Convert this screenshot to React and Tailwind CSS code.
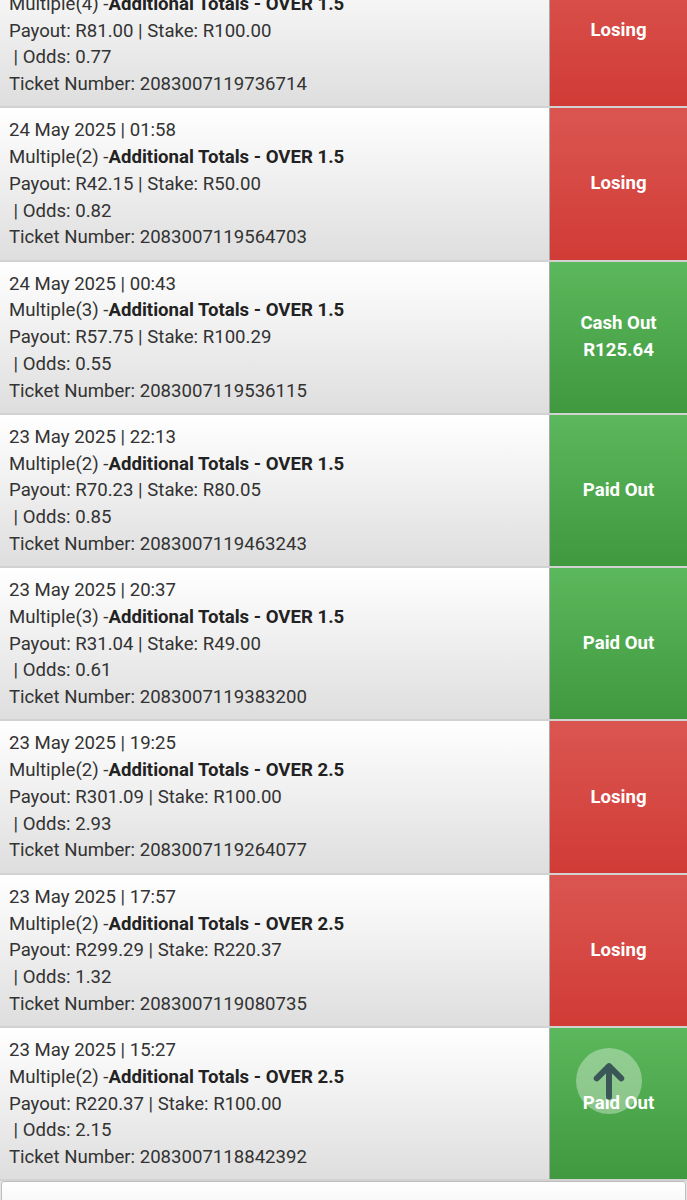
import React from "react";

const rows = [
  { date: "24 May 2025 | 09:12", mult: 4, over: "1.5", payout: "R81.00", stake: "R100.00", odds: "0.77", ticket: "2083007119736714", status: "lose" },
  { date: "24 May 2025 | 01:58", mult: 2, over: "1.5", payout: "R42.15", stake: "R50.00", odds: "0.82", ticket: "2083007119564703", status: "lose" },
  { date: "24 May 2025 | 00:43", mult: 3, over: "1.5", payout: "R57.75", stake: "R100.29", odds: "0.55", ticket: "2083007119536115", status: "cash" },
  { date: "23 May 2025 | 22:13", mult: 2, over: "1.5", payout: "R70.23", stake: "R80.05", odds: "0.85", ticket: "2083007119463243", status: "paid" },
  { date: "23 May 2025 | 20:37", mult: 3, over: "1.5", payout: "R31.04", stake: "R49.00", odds: "0.61", ticket: "2083007119383200", status: "paid" },
  { date: "23 May 2025 | 19:25", mult: 2, over: "2.5", payout: "R301.09", stake: "R100.00", odds: "2.93", ticket: "2083007119264077", status: "lose" },
  { date: "23 May 2025 | 17:57", mult: 2, over: "2.5", payout: "R299.29", stake: "R220.37", odds: "1.32", ticket: "2083007119080735", status: "lose" },
  { date: "23 May 2025 | 15:27", mult: 2, over: "2.5", payout: "R220.37", stake: "R100.00", odds: "2.15", ticket: "2083007118842392", status: "paid" },
];

function StatusCell({ status }) {
  if (status === "lose") {
    return (
      <div className="w-[138px] shrink-0 border-l border-[#a9a9a9] bg-gradient-to-b from-[#db5550] to-[#d13b36] flex items-center justify-center text-white font-bold text-[18.6px] leading-[27px]">
        Losing
      </div>
    );
  }
  if (status === "cash") {
    return (
      <div className="w-[138px] shrink-0 border-l border-[#a9a9a9] bg-gradient-to-b from-[#5cb85c] to-[#40983f] flex flex-col items-center justify-center text-white font-bold text-[18.6px] leading-[27px]">
        <span>Cash Out</span>
        <span>R125.64</span>
      </div>
    );
  }
  return (
    <div className="w-[138px] shrink-0 border-l border-[#a9a9a9] bg-gradient-to-b from-[#5cb85c] to-[#40983f] flex items-center justify-center text-white font-bold text-[18.6px] leading-[27px]">
      Paid Out
    </div>
  );
}

function Row({ r, children }) {
  return (
    <div className="relative flex h-[153.3px] border-b-2 border-[#d2d2d2]">
      <div className="flex-1 bg-gradient-to-b from-[#ffffff] to-[#dedede] pl-[9px] pt-[9px] text-[18.6px] leading-[26.75px] text-[#333333] whitespace-pre">
        <div>{r.date}</div>
        <div>
          Multiple({r.mult}) -<span className="font-bold text-[#222222]">Additional Totals - OVER {r.over}</span>
        </div>
        <div>Payout: {r.payout} | Stake: {r.stake}</div>
        <div>{" | Odds: " + r.odds}</div>
        <div>Ticket Number: {r.ticket}</div>
      </div>
      <StatusCell status={r.status} />
      {children}
    </div>
  );
}

export default function App() {
  return (
    <div
      className="relative w-[687px] h-[1200px] overflow-hidden bg-[#e6e6e6]"
      style={{ fontFamily: "Roboto, 'Noto Sans', Arial, sans-serif" }}
    >
      <div className="-mt-[45px]">
        {rows.map((r, i) => (
          <Row key={i} r={r}>
            {i === rows.length - 1 && (
              <div className="absolute left-[576px] top-[20px] w-[66px] h-[66px] rounded-full bg-white/35 flex items-center justify-center">
                <svg width="42" height="42" viewBox="0 0 24 24" fill="none" stroke="#3a5656" strokeWidth="3.4" strokeLinecap="round" strokeLinejoin="round">
                  <path d="M12 21V4" />
                  <path d="M5 10.5 12 3.5 19 10.5" />
                </svg>
              </div>
            )}
          </Row>
        ))}
      </div>
      <div className="mx-[1px] h-[30px] rounded-t-[3px] border border-[#bdbdbd] bg-gradient-to-b from-white to-[#f5f5f5]" />
    </div>
  );
}
